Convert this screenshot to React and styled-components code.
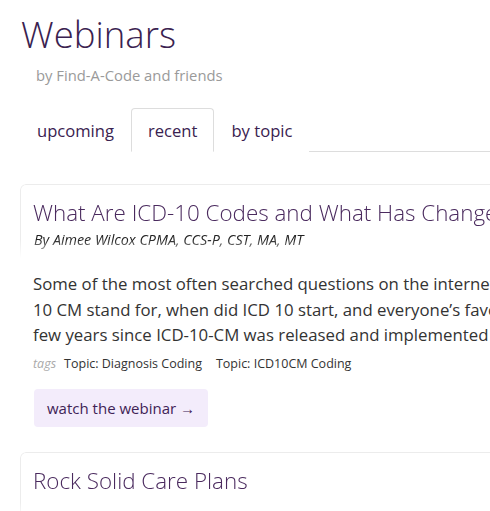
import React from "react";
import styled, { createGlobalStyle } from "styled-components";

const Global = createGlobalStyle`
  html, body { margin: 0; padding: 0; background: #fff; overflow: hidden; }
  body { font-family: "Open Sans", "Noto Sans", sans-serif; color: #333; }
`;

const Page = styled.div`
  width: 760px;
  padding: 0 0 0 20px;
`;

const Title = styled.h1`
  margin: 0;
  padding-top: 8px;
  font-size: 36.6px;
  font-weight: 300;
  line-height: 52px;
  color: #3a2250;
  padding-left: 1px;
`;

const Subtitle = styled.div`
  margin: 5px 0 0 16px;
  font-size: 14.8px;
  line-height: 20px;
  color: #9a9a9a;
`;

const Tabs = styled.div`
  display: flex;
  margin-top: 23px;
  border-bottom: 1px solid #ddd;
`;

const Tab = styled.div`
  padding: 0 16px;
  height: 42px;
  display: flex;
  align-items: center;
  font-size: 16.6px;
  color: #3a2250;
  border: 1px solid ${(p) => (p.$active ? "#ddd" : "transparent")};
  border-bottom: 1px solid ${(p) => (p.$active ? "#fff" : "transparent")};
  border-radius: 4px 4px 0 0;
  margin-bottom: -1px;
  background: #fff;
`;

const List = styled.div`
  display: flex;
  flex-direction: column;
  gap: 25px;
  margin-top: 32px;
`;

const Card = styled.div`
  display: flex;
  flex-direction: column;
`;

const CardHead = styled.div`
  border: 1px solid #ececec;
  border-bottom: none;
  border-radius: 6px 6px 0 0;
  padding: 12px 12px 8px 12px;
  min-height: 46px;
  -webkit-mask-image: linear-gradient(to bottom, #000 75%, transparent 100%);
`;

const CardTitle = styled.h2`
  margin: 0;
  font-size: 22.4px;
  font-weight: 300;
  line-height: 32px;
  color: #4a2a5e;
  white-space: nowrap;
`;

const Author = styled.div`
  font-size: 14.3px;
  font-style: italic;
  line-height: 20px;
  color: #222;
  margin-left: 1px;
  margin-top: 1px;
`;

const CardBody = styled.div`
  padding: 13px 13px 0 13px;
  display: flex;
  flex-direction: column;
`;

const Text = styled.p`
  margin: 0;
  font-size: 16.8px;
  line-height: 25.5px;
  color: #333;
`;

const Line = styled.span`
  display: block;
  white-space: nowrap;
`;

const Tags = styled.div`
  display: flex;
  gap: 14px;
  align-items: baseline;
  margin-top: 7px;
  font-size: 12.5px;
  line-height: 18px;
  color: #333;
`;

const TagsLabel = styled.span`
  font-style: italic;
  color: #aaa;
  margin-right: -6px;
`;

const Button = styled.a`
  display: inline-block;
  margin-top: 16px;
  padding: 0 13px;
  height: 38px;
  line-height: 38px;
  background: #f3ecfb;
  border-radius: 4px;
  color: #3f2356;
  font-size: 15px;
  text-decoration: none;
  align-self: flex-start;
  margin-left: 1px;
`;

export default function App() {
  return (
    <>
      <Global />
      <Page>
        <Title>Webinars</Title>
        <Subtitle>by Find-A-Code and friends</Subtitle>
        <Tabs>
          <Tab>upcoming</Tab>
          <Tab $active>recent</Tab>
          <Tab>by topic</Tab>
        </Tabs>
        <List>
          <Card>
            <CardHead>
              <CardTitle>What Are ICD-10 Codes and What Has Changed Since Implementation?</CardTitle>
              <Author>By Aimee Wilcox CPMA, CCS-P, CST, MA, MT</Author>
            </CardHead>
            <CardBody>
              <Text>
                <Line>Some of the most often searched questions on the internet about ICD-10 include what does ICD</Line>
                <Line>10 CM stand for, when did ICD 10 start, and everyone’s favorite, what has changed in the</Line>
                <Line>few years since ICD-10-CM was released and implemented in the United States?</Line>
              </Text>
              <Tags>
                <TagsLabel>tags</TagsLabel>
                <span>Topic: Diagnosis Coding</span>
                <span>Topic: ICD10CM Coding</span>
              </Tags>
              <Button href="#">watch the webinar →</Button>
            </CardBody>
          </Card>
          <Card>
            <CardHead>
              <CardTitle>Rock Solid Care Plans</CardTitle>
            </CardHead>
          </Card>
        </List>
      </Page>
    </>
  );
}
